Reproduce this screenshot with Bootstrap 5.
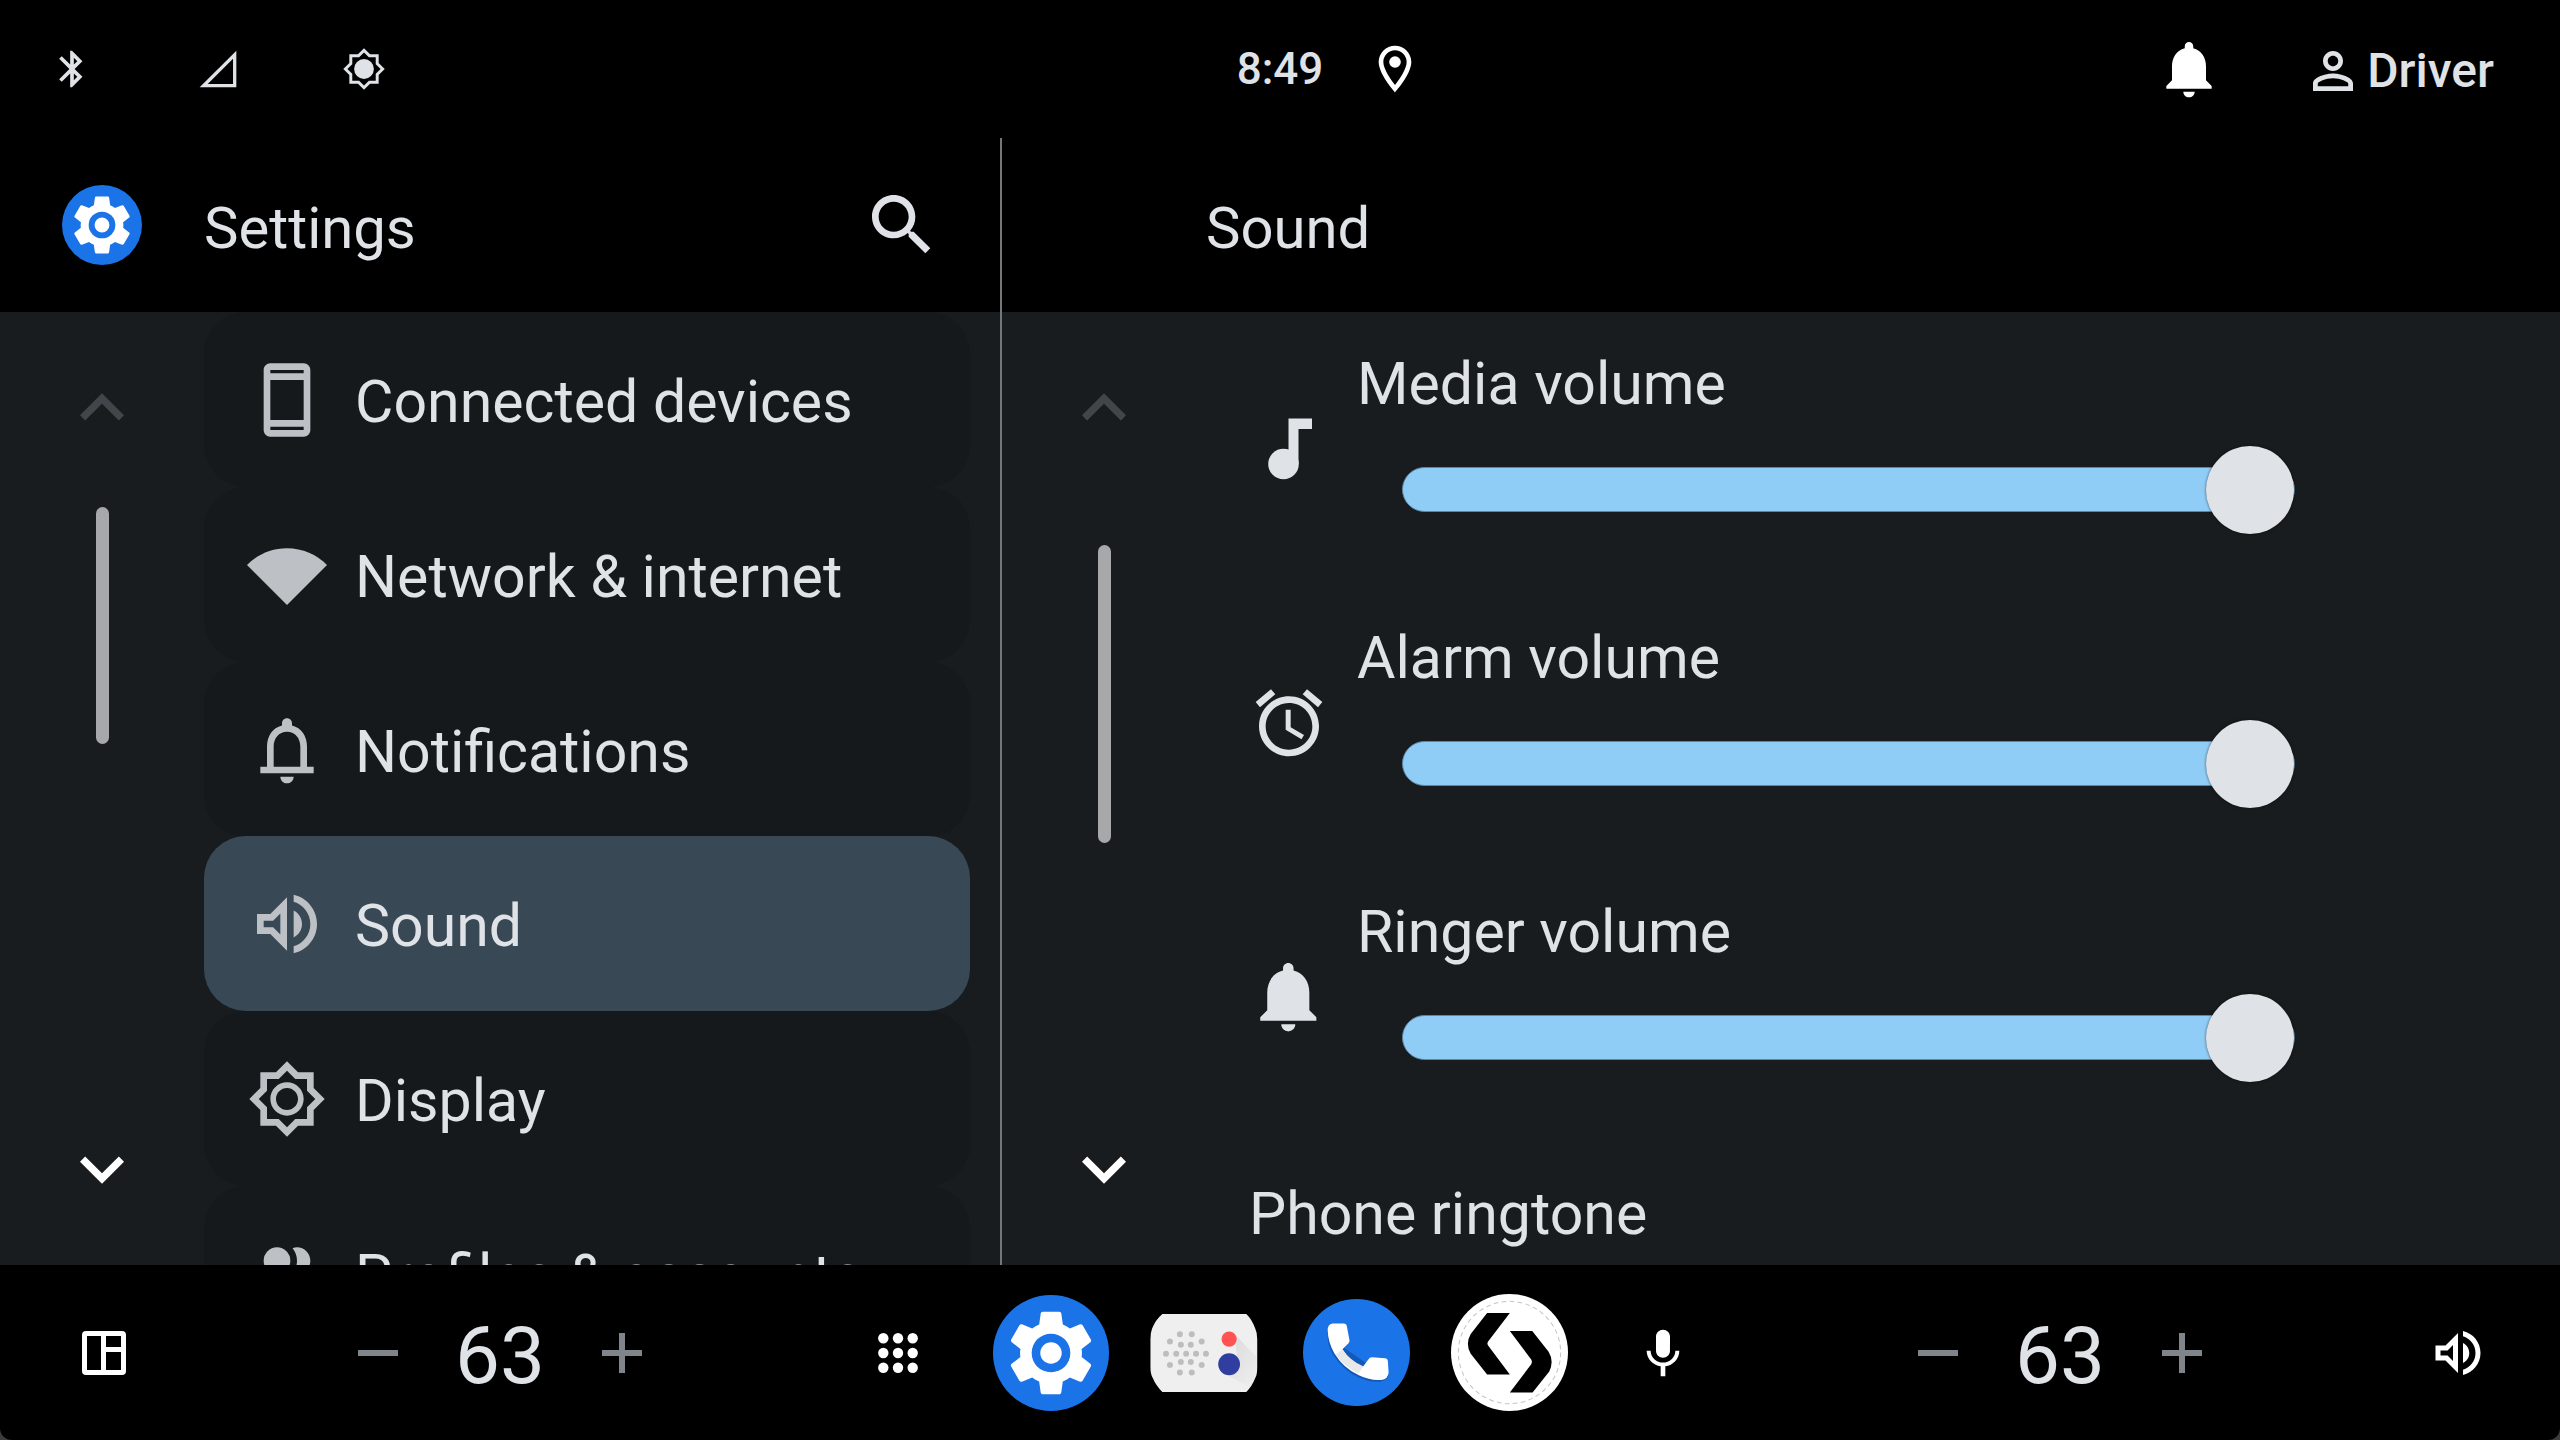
<!DOCTYPE html>
<html lang="en" data-bs-theme="dark">
<head>
<meta charset="utf-8">
<meta name="viewport" content="width=device-width, initial-scale=1">
<title>Settings - Sound</title>
<link href="https://cdn.jsdelivr.net/npm/bootstrap@5.3.0/dist/css/bootstrap.min.css" rel="stylesheet">
<style>
  :root { --ink: #dfe2e6; --soft: #bdc1c6; --panel: #191c1e; --row: #15191b; --active: #384955; --fill: #90cdf6; }
  body { font-family: Roboto, "Liberation Sans", sans-serif; background: #3c3c3c; color: var(--ink); line-height: 1.2; }
  svg { display: block; flex: none; fill: currentColor; }
  .shell { background: #000; border-radius: 0 0 12px 12px; }
  .three { display: grid; grid-template-columns: minmax(0, 1fr) auto minmax(0, 1fr); align-items: center; }
  .statusbar { height: 138px; }
  .status-left { padding-left: 50px; gap: 102px; }
  .status-right { padding-left: 44px; padding-right: 66px; }
  .clock { font-size: 44px; font-weight: 500; }
  .driver { font-size: 48px; font-weight: 500; gap: 4px; margin-left: 80px; padding-top: 4px !important; }
  .plain { background: none; border: 0; padding: 0; color: inherit; border-radius: 0; line-height: 1.2; }
  .i44 { width: 44px; height: 44px; } .i56 { width: 56px; height: 56px; } .i60 { width: 60px; height: 60px; }
  .i68 { width: 68px; height: 68px; } .i80 { width: 80px; height: 80px; } .i88 { width: 88px; height: 88px; }
  .sidebar { width: 1002px; border-right: 2px solid #74777a; }
  .pane-head { height: 174px; background: #000; }
  .pane-body { background: var(--panel); }
  .title { font-size: 58px; font-weight: 400; padding-top: 8px; color: var(--ink); }
  .search { margin-right: 58px; }
  .rail { width: 204px; padding: 52px 0; }
  .thumb { width: 13px; border-radius: 7px; background: #a7a8aa; }
  .thumb-side { height: 237px; margin-top: 55px; }
  .thumb-main { height: 298px; margin-top: 93px; }
  .dim { color: #42464a; }
  .menu { margin-right: 30px; }
  .menu .list-group-item { height: 175px; flex: none; padding: 0 43px; gap: 28px; border: 0; border-radius: 42px; background: var(--row); color: var(--ink); font-size: 59px; }
  .menu .list-group-item.active { background: var(--active); }
  .menu svg { color: var(--soft); }
  .menu span { padding-top: 5px; }
  .vol { height: 274px; padding-left: 43px; padding-right: 265px; gap: 28px; }
  .vol label { font-size: 59px; line-height: 70px; display: block; }
  .vol-body { padding-bottom: 16px; }
  .vol-slide { padding-left: 45px; padding-top: 26px; }
  .vol input { height: 88px; }
  .vol input::-webkit-slider-runnable-track { height: 45px; border-radius: 23px; background: var(--fill); border: 1px solid #5d86a2; }
  .vol input::-webkit-slider-thumb { width: 88px; height: 88px; margin-top: -22px; background: #dfe2e6; box-shadow: 0 0 3px rgba(0,0,0,.6); border-radius: 50%; }
  .ringtone { height: 160px; padding-left: 43px; font-size: 59px; }
  .dock { height: 175px; }
  .dock-cell { width: 153px; }
  .edge { width: 88px; }
  .climate-cell { width: 122px; }
  .temp { font-size: 80px; padding-top: 6px; }
  .dock-side { padding: 0 58px 0 138px; }
  .dock-side.first { padding: 0 138px 0 60px; }
  .grey { color: #7f858a; }
</style>
</head>
<body>
<svg width="0" height="0" class="position-absolute" aria-hidden="true">
  <symbol id="gear" viewBox="-1.5 -1.5 27 27">
    <circle cx="12" cy="12" r="13.5" fill="#1b73e8"/>
    <path fill="#fff" d="M19.14 12.94c.04-.3.06-.61.06-.94 0-.32-.02-.64-.07-.94l2.03-1.58c.18-.14.23-.41.12-.61l-1.92-3.32c-.12-.22-.37-.29-.59-.22l-2.39.96c-.5-.38-1.03-.7-1.62-.94L14.4 2.81c-.04-.24-.24-.41-.48-.41h-3.84c-.24 0-.43.17-.47.41L9.25 5.35c-.59.24-1.13.57-1.62.94L5.24 5.33c-.22-.08-.47 0-.59.22L2.74 8.87c-.12.21-.08.47.12.61l2.03 1.58c-.05.3-.09.63-.09.94s.02.64.07.94l-2.03 1.58c-.18.14-.23.41-.12.61l1.92 3.32c.12.22.37.29.59.22l2.39-.96c.5.38 1.03.7 1.62.94l.36 2.54c.05.24.24.41.48.41h3.84c.24 0 .44-.17.47-.41l.36-2.54c.59-.24 1.13-.56 1.62-.94l2.39.96c.22.08.47 0 .59-.22l1.92-3.32c.12-.22.07-.47-.12-.61l-2.01-1.58z"/>
    <circle cx="12" cy="12" r="4.5" fill="#1b73e8"/><circle cx="12" cy="12" r="2.5" fill="#fff"/>
  </symbol>
  <symbol id="up" viewBox="0 0 24 24"><path d="M12 8l-6 6 1.41 1.41L12 10.83l4.59 4.58L18 14z"/></symbol>
  <symbol id="down" viewBox="0 0 24 24"><path d="M16.59 8.59L12 13.17 7.41 8.59 6 10l6 6 6-6z"/></symbol>
  <symbol id="bell" viewBox="0 0 24 24"><path d="M12 22c1.1 0 2-.9 2-2h-4c0 1.1.89 2 2 2zm6-6v-5c0-3.07-1.64-5.64-4.5-6.32V4c0-.83-.67-1.5-1.5-1.5s-1.5.67-1.5 1.5v.68C7.63 5.36 6 7.92 6 11v5l-2 2v1h16v-1l-2-2z"/></symbol>
  <symbol id="speaker" viewBox="0 0 24 24"><path d="M3 9v6h4l5 5V4L7 9H3zm7-.17v6.34L7.83 13H5v-2h2.83L10 8.83zM16.5 12c0-1.77-1.02-3.29-2.5-4.03v8.05c1.48-.73 2.5-2.25 2.5-4.02zM14 3.23v2.06c2.89.86 5 3.54 5 6.71s-2.11 5.85-5 6.71v2.06c4.01-.91 7-4.49 7-8.77s-2.99-7.86-7-8.77z"/></symbol>
  <symbol id="minus" viewBox="0 0 40 40"><path d="M0 17h40v6H0z"/></symbol>
  <symbol id="plus" viewBox="0 0 40 40"><path d="M0 17h17V0h6v17h17v6H23v17h-6V23H0z"/></symbol>
</svg>

<div class="shell vh-100 d-flex flex-column overflow-hidden">
  <header class="statusbar three flex-shrink-0">
    <div class="status-left d-flex align-items-center">
      <svg class="i44" viewBox="0 0 24 24"><path d="M17.71 7.71L12 2h-1v7.59L6.41 5 5 6.41 10.59 12 5 17.59 6.41 19 11 14.41V22h1l5.71-5.71-4.3-4.29 4.3-4.29zM13 5.83l1.88 1.88L13 9.59V5.83zm1.88 10.46L13 18.17v-3.76l1.88 1.88z"/></svg>
      <svg class="i44" viewBox="0 0 24 24"><path d="M2 22h20V2L2 22zm18.2-1.8H6.4L20.2 6.4v13.8z"/></svg>
      <svg class="i44" viewBox="0 0 24 24"><path fill-rule="evenodd" d="M20 8.69V4h-4.69L12 .69 8.69 4H4v4.69L.69 12 4 15.31V20h4.69L12 23.31 15.31 20H20v-4.69L23.31 12 20 8.69zm-1.6 5.96v3.75h-3.75L12 21.05 9.35 18.4H5.6v-3.75L2.95 12 5.6 9.35V5.6h3.75L12 2.95l2.65 2.65h3.75v3.75L21.05 12l-2.65 2.65z"/><circle cx="12" cy="12" r="5.4"/></svg>
    </div>
    <time class="clock">8:49</time>
    <div class="status-right d-flex align-items-center">
      <svg class="i56 text-white" viewBox="0 0 24 24"><path d="M12 2C8.13 2 5 5.13 5 9c0 5.25 7 13 7 13s7-7.75 7-13c0-3.87-3.13-7-7-7zM7 9c0-2.76 2.24-5 5-5s5 2.24 5 5c0 2.88-2.88 7.19-5 9.88C9.92 16.21 7 11.85 7 9z"/><circle cx="12" cy="9" r="2.5"/></svg>
      <button type="button" class="plain ms-auto text-white" aria-label="Notifications"><svg class="i68"><use href="#bell"/></svg></button>
      <button type="button" class="plain driver d-flex align-items-center"><svg class="i60" viewBox="0 0 24 24"><path d="M12 5.9c1.16 0 2.1.94 2.1 2.1s-.94 2.1-2.1 2.1S9.9 9.16 9.9 8s.94-2.1 2.1-2.1m0 9c2.97 0 6.1 1.46 6.1 2.1v1.1H5.9V17c0-.64 3.13-2.1 6.1-2.1M12 4C9.79 4 8 5.79 8 8s1.79 4 4 4 4-1.79 4-4-1.79-4-4-4zm0 9c-2.67 0-8 1.34-8 4v3h16v-3c0-2.66-5.33-4-8-4z"/></svg>Driver</button>
    </div>
  </header>

  <main class="d-flex flex-grow-1 overflow-hidden">
    <section class="sidebar d-flex flex-column flex-shrink-0">
      <div class="pane-head d-flex align-items-center flex-shrink-0">
        <div class="rail p-0 d-flex justify-content-center"><svg class="i80"><use href="#gear"/></svg></div>
        <h1 class="title m-0">Settings</h1>
        <button type="button" class="plain search ms-auto" aria-label="Search"><svg class="i80" viewBox="0 0 24 24"><path d="M15.5 14h-.79l-.28-.27C15.41 12.59 16 11.11 16 9.5 16 5.91 13.09 3 9.5 3S3 5.91 3 9.5 5.91 16 9.5 16c1.61 0 3.09-.59 4.23-1.57l.27.28v.79l5 4.99L20.49 19l-4.99-5zm-6 0C7.01 14 5 11.99 5 9.5S7.01 5 9.5 5 14 7.01 14 9.5 11.99 14 9.5 14z"/></svg></button>
      </div>
      <div class="pane-body d-flex flex-grow-1 overflow-hidden">
        <div class="rail d-flex flex-column align-items-center flex-shrink-0">
          <button type="button" class="plain dim" aria-label="Scroll up"><svg class="i88"><use href="#up"/></svg></button>
          <div class="thumb thumb-side"></div>
          <button type="button" class="plain text-white mt-auto" aria-label="Scroll down"><svg class="i88"><use href="#down"/></svg></button>
        </div>
        <nav class="menu list-group flex-grow-1 rounded-0">
          <a href="#" class="list-group-item d-flex align-items-center"><svg class="i80" viewBox="0 0 24 24"><path d="M17 1.01L7 1c-1.1 0-2 .9-2 2v18c0 1.1.9 2 2 2h10c1.1 0 2-.9 2-2V3c0-1.1-.9-1.99-2-1.99zM17 21H7v-1h10v1zm0-3H7V6h10v12zm0-14H7V3h10v1z"/></svg><span>Connected devices</span></a>
          <a href="#" class="list-group-item d-flex align-items-center"><svg class="i80" viewBox="0 0 24 24"><path d="M12 4C7.31 4 3.07 5.9 0 8.98L12 21 24 8.98C20.93 5.9 16.69 4 12 4z"/></svg><span>Network &amp; internet</span></a>
          <a href="#" class="list-group-item d-flex align-items-center"><svg class="i80" viewBox="0 0 24 24"><path d="M12 22c1.1 0 2-.9 2-2h-4c0 1.1.9 2 2 2zm6-6v-5c0-3.07-1.63-5.64-4.5-6.32V4c0-.83-.67-1.5-1.5-1.5s-1.5.67-1.5 1.5v.68C7.64 5.36 6 7.92 6 11v6H4v2h16v-2h-2v-1zm-2 1H8v-6c0-2.48 1.51-4.5 4-4.5s4 2.02 4 4.5v6z"/></svg><span>Notifications</span></a>
          <a href="#" class="list-group-item active d-flex align-items-center" aria-current="page"><svg class="i80"><use href="#speaker"/></svg><span>Sound</span></a>
          <a href="#" class="list-group-item d-flex align-items-center"><svg class="i80" viewBox="0 0 24 24"><path d="M20 8.69V4h-4.69L12 .69 8.69 4H4v4.69L.69 12 4 15.31V20h4.69L12 23.31 15.31 20H20v-4.69L23.31 12 20 8.69zm-2 5.79V18h-3.52L12 20.48 9.52 18H6v-3.52L3.52 12 6 9.52V6h3.52L12 3.52 14.48 6H18v3.52L20.48 12 18 14.48z"/><path d="M12 7c-2.76 0-5 2.24-5 5s2.24 5 5 5 5-2.24 5-5-2.24-5-5-5zm0 8.3c-1.82 0-3.3-1.48-3.3-3.3s1.48-3.3 3.3-3.3 3.3 1.48 3.3 3.3-1.48 3.3-3.3 3.3z"/></svg><span>Display</span></a>
          <a href="#" class="list-group-item d-flex align-items-center"><svg class="i80" viewBox="0 0 24 24"><circle cx="9" cy="8" r="4"/><path d="M15 12c2.21 0 4-1.79 4-4s-1.79-4-4-4c-.47 0-.91.1-1.33.24C14.5 5.27 15 6.58 15 8s-.5 2.73-1.33 3.76c.42.14.86.24 1.33.24zM9 13c-2.67 0-8 1.34-8 4v3h16v-3c0-2.66-5.33-4-8-4zM16.67 13.13C18.04 14.06 19 15.32 19 17v3h4v-3c0-2.18-3.57-3.47-6.33-3.87z"/></svg><span>Profiles &amp; accounts</span></a>
        </nav>
      </div>
    </section>

    <section class="d-flex flex-column flex-grow-1">
      <div class="pane-head d-flex align-items-center flex-shrink-0">
        <div class="rail p-0"></div>
        <h2 class="title m-0">Sound</h2>
      </div>
      <div class="pane-body d-flex flex-grow-1 overflow-hidden">
        <div class="rail d-flex flex-column align-items-center flex-shrink-0">
          <button type="button" class="plain dim" aria-label="Scroll up"><svg class="i88"><use href="#up"/></svg></button>
          <div class="thumb thumb-main"></div>
          <button type="button" class="plain text-white mt-auto" aria-label="Scroll down"><svg class="i88"><use href="#down"/></svg></button>
        </div>
        <div class="flex-grow-1">
          <div class="vol d-flex align-items-center">
            <svg class="i80" viewBox="0 0 80 80"><circle cx="34.5" cy="55" r="15.3"/><path d="M39.5 9.5H63V20H49.5v35h-10z"/></svg>
            <div class="vol-body flex-grow-1"><label for="media">Media volume</label><div class="vol-slide"><input type="range" class="form-range d-block p-0" id="media" min="0" max="40" value="40"></div></div>
          </div>
          <div class="vol d-flex align-items-center">
            <svg class="i80" viewBox="0 0 24 24"><path d="M22 5.72l-4.6-3.86-1.29 1.53 4.6 3.86L22 5.72zM7.88 3.39L6.6 1.86 2 5.71l1.29 1.53 4.59-3.85zM12.5 8H11v6l4.75 2.85.75-1.23-4-2.37V8zM12 4c-4.97 0-9 4.03-9 9s4.02 9 9 9c4.97 0 9-4.03 9-9s-4.03-9-9-9zm0 16c-3.87 0-7-3.13-7-7s3.13-7 7-7 7 3.13 7 7-3.13 7-7 7z"/></svg>
            <div class="vol-body flex-grow-1"><label for="alarm">Alarm volume</label><div class="vol-slide"><input type="range" class="form-range d-block p-0" id="alarm" min="0" max="40" value="40"></div></div>
          </div>
          <div class="vol d-flex align-items-center">
            <svg class="i80" viewBox="0.8 0.8 22.8 22.8"><use href="#bell" width="24" height="24"/></svg>
            <div class="vol-body flex-grow-1"><label for="ringer">Ringer volume</label><div class="vol-slide"><input type="range" class="form-range d-block p-0" id="ringer" min="0" max="40" value="40"></div></div>
          </div>
          <div class="ringtone d-flex align-items-center">Phone ringtone</div>
        </div>
      </div>
    </section>
  </main>

  <footer class="dock three flex-shrink-0">
    <div class="dock-side first d-flex align-items-center justify-content-between">
      <button type="button" class="plain edge d-flex justify-content-center text-white" aria-label="Layout"><svg class="i44" viewBox="0 0 44 44"><path fill-rule="evenodd" d="M4 0h36a4 4 0 0 1 4 4v36a4 4 0 0 1-4 4H4a4 4 0 0 1-4-4V4a4 4 0 0 1 4-4zm1 5v34h14V5zm19 0v11h15V5zm0 16v18h15V21z"/></svg></button>
      <div class="d-flex align-items-center">
        <button type="button" class="plain grey climate-cell d-flex justify-content-center" aria-label="Cooler"><svg width="40" height="40"><use href="#minus"/></svg></button>
        <span class="temp climate-cell text-center">63</span>
        <button type="button" class="plain grey climate-cell d-flex justify-content-center" aria-label="Warmer"><svg width="40" height="40"><use href="#plus"/></svg></button>
      </div>
    </div>
    <div class="d-flex align-items-center text-white">
      <button type="button" class="plain dock-cell d-flex justify-content-center" aria-label="Apps"><svg width="40" height="40" viewBox="0 0 40 40"><circle cx="5.3" cy="5.3" r="5.2"/><circle cx="20" cy="5.3" r="5.2"/><circle cx="34.7" cy="5.3" r="5.2"/><circle cx="5.3" cy="20" r="5.2"/><circle cx="20" cy="20" r="5.2"/><circle cx="34.7" cy="20" r="5.2"/><circle cx="5.3" cy="34.7" r="5.2"/><circle cx="20" cy="34.7" r="5.2"/><circle cx="34.7" cy="34.7" r="5.2"/></svg></button>
      <button type="button" class="plain dock-cell d-flex justify-content-center" aria-label="Settings"><svg width="116" height="116"><use href="#gear"/></svg></button>
      <button type="button" class="plain dock-cell d-flex justify-content-center" aria-label="Radio"><svg width="108" height="78" viewBox="29 84 324 236">
        <defs><linearGradient id="shade" x1="0" y1="0" x2="1" y2="1"><stop offset="0" stop-color="#000" stop-opacity=".1"/><stop offset="1" stop-color="#000" stop-opacity="0"/></linearGradient></defs>
        <path fill="#efefef" d="M65 84H319Q336 100 346 128Q352 140 352 160V245Q352 268 346 278Q336 304 319 320H65Q46 302 36 278Q29 266 29 245V160Q29 140 34 128Q44 102 65 84Z"/>
        <path fill="url(#shade)" d="M284 145L350 215V255Q350 270 344 282L330 306L244 260L291 215Z"/>
        <g fill="#bdbdbd"><circle cx="118" cy="145" r="9"/><circle cx="154" cy="145" r="9"/><circle cx="88" cy="167" r="9"/><circle cx="184" cy="167" r="9"/><circle cx="121" cy="177" r="9"/><circle cx="151" cy="177" r="9"/><circle cx="76" cy="204" r="9"/><circle cx="107" cy="204" r="9"/><circle cx="137" cy="204" r="9"/><circle cx="167" cy="204" r="9"/><circle cx="197" cy="204" r="9"/><circle cx="121" cy="229" r="9"/><circle cx="151" cy="229" r="9"/><circle cx="88" cy="238" r="9"/><circle cx="184" cy="238" r="9"/><circle cx="118" cy="261" r="9"/><circle cx="154" cy="261" r="9"/></g>
        <circle cx="267" cy="160" r="23" fill="#ff5252"/><circle cx="267" cy="236" r="33" fill="#303f9f"/></svg></button>
      <button type="button" class="plain dock-cell d-flex justify-content-center" aria-label="Phone"><svg width="107" height="107" viewBox="488 42 320 320">
        <circle cx="648" cy="202" r="160" fill="#1b73e8"/>
        <path fill="#1259b8" d="M562 140Q558 180 580 212Q610 258 655 277Q690 293 722 289Q742 285 744 268L700 250L600 180Z"/>
        <path fill="#fff" d="M576 115Q562 117 562 135Q562 170 582 205Q610 250 655 270Q690 287 722 284Q743 282 744 262L742 230Q742 220 733 219L695 216Q686 216 684 222L666 246Q625 225 606 192L624 174Q628 170 627 165L619 123Q618 115 610 115Z"/>
        <path fill="#e8e8e8" d="M606 192Q628 226 668 243L654 265Q612 245 586 208Z"/></svg></button>
      <button type="button" class="plain dock-cell d-flex justify-content-center" aria-label="Navigator"><svg width="117" height="117" viewBox="932 27 350 350">
        <circle cx="1107" cy="202" r="175" fill="#fff"/><circle cx="1107" cy="202" r="153" fill="none" stroke="#c4c4c4" stroke-width="3" stroke-dasharray="14 10"/>
        <path fill="#000" d="M1040 84H1108L1043 169Q1039 175 1043 181L1108 268H1040L991 206Q974 176 991 147ZM1108 138H1175L1224 200Q1241 228 1226 259L1176 322H1108L1172 237Q1176 230 1172 223Z"/></svg></button>
      <button type="button" class="plain dock-cell d-flex justify-content-center" aria-label="Voice"><svg class="i56" viewBox="0 0 24 24"><path d="M12 14c1.66 0 2.99-1.34 2.99-3L15 5c0-1.66-1.34-3-3-3S9 3.34 9 5v6c0 1.66 1.34 3 3 3zm5.3-3c0 3-2.54 5.1-5.3 5.1S6.7 14 6.7 11H5c0 3.41 2.72 6.23 6 6.72V22h2v-4.28c3.28-.48 6-3.3 6-6.72h-1.7z"/></svg></button>
    </div>
    <div class="dock-side d-flex align-items-center justify-content-between">
      <div class="d-flex align-items-center">
        <button type="button" class="plain grey climate-cell d-flex justify-content-center" aria-label="Cooler"><svg width="40" height="40"><use href="#minus"/></svg></button>
        <span class="temp climate-cell text-center">63</span>
        <button type="button" class="plain grey climate-cell d-flex justify-content-center" aria-label="Warmer"><svg width="40" height="40"><use href="#plus"/></svg></button>
      </div>
      <button type="button" class="plain edge d-flex justify-content-center text-white" aria-label="Volume"><svg class="i60"><use href="#speaker"/></svg></button>
    </div>
  </footer>
</div>
<script src="https://cdn.jsdelivr.net/npm/bootstrap@5.3.0/dist/js/bootstrap.bundle.min.js"></script>
</body>
</html>
